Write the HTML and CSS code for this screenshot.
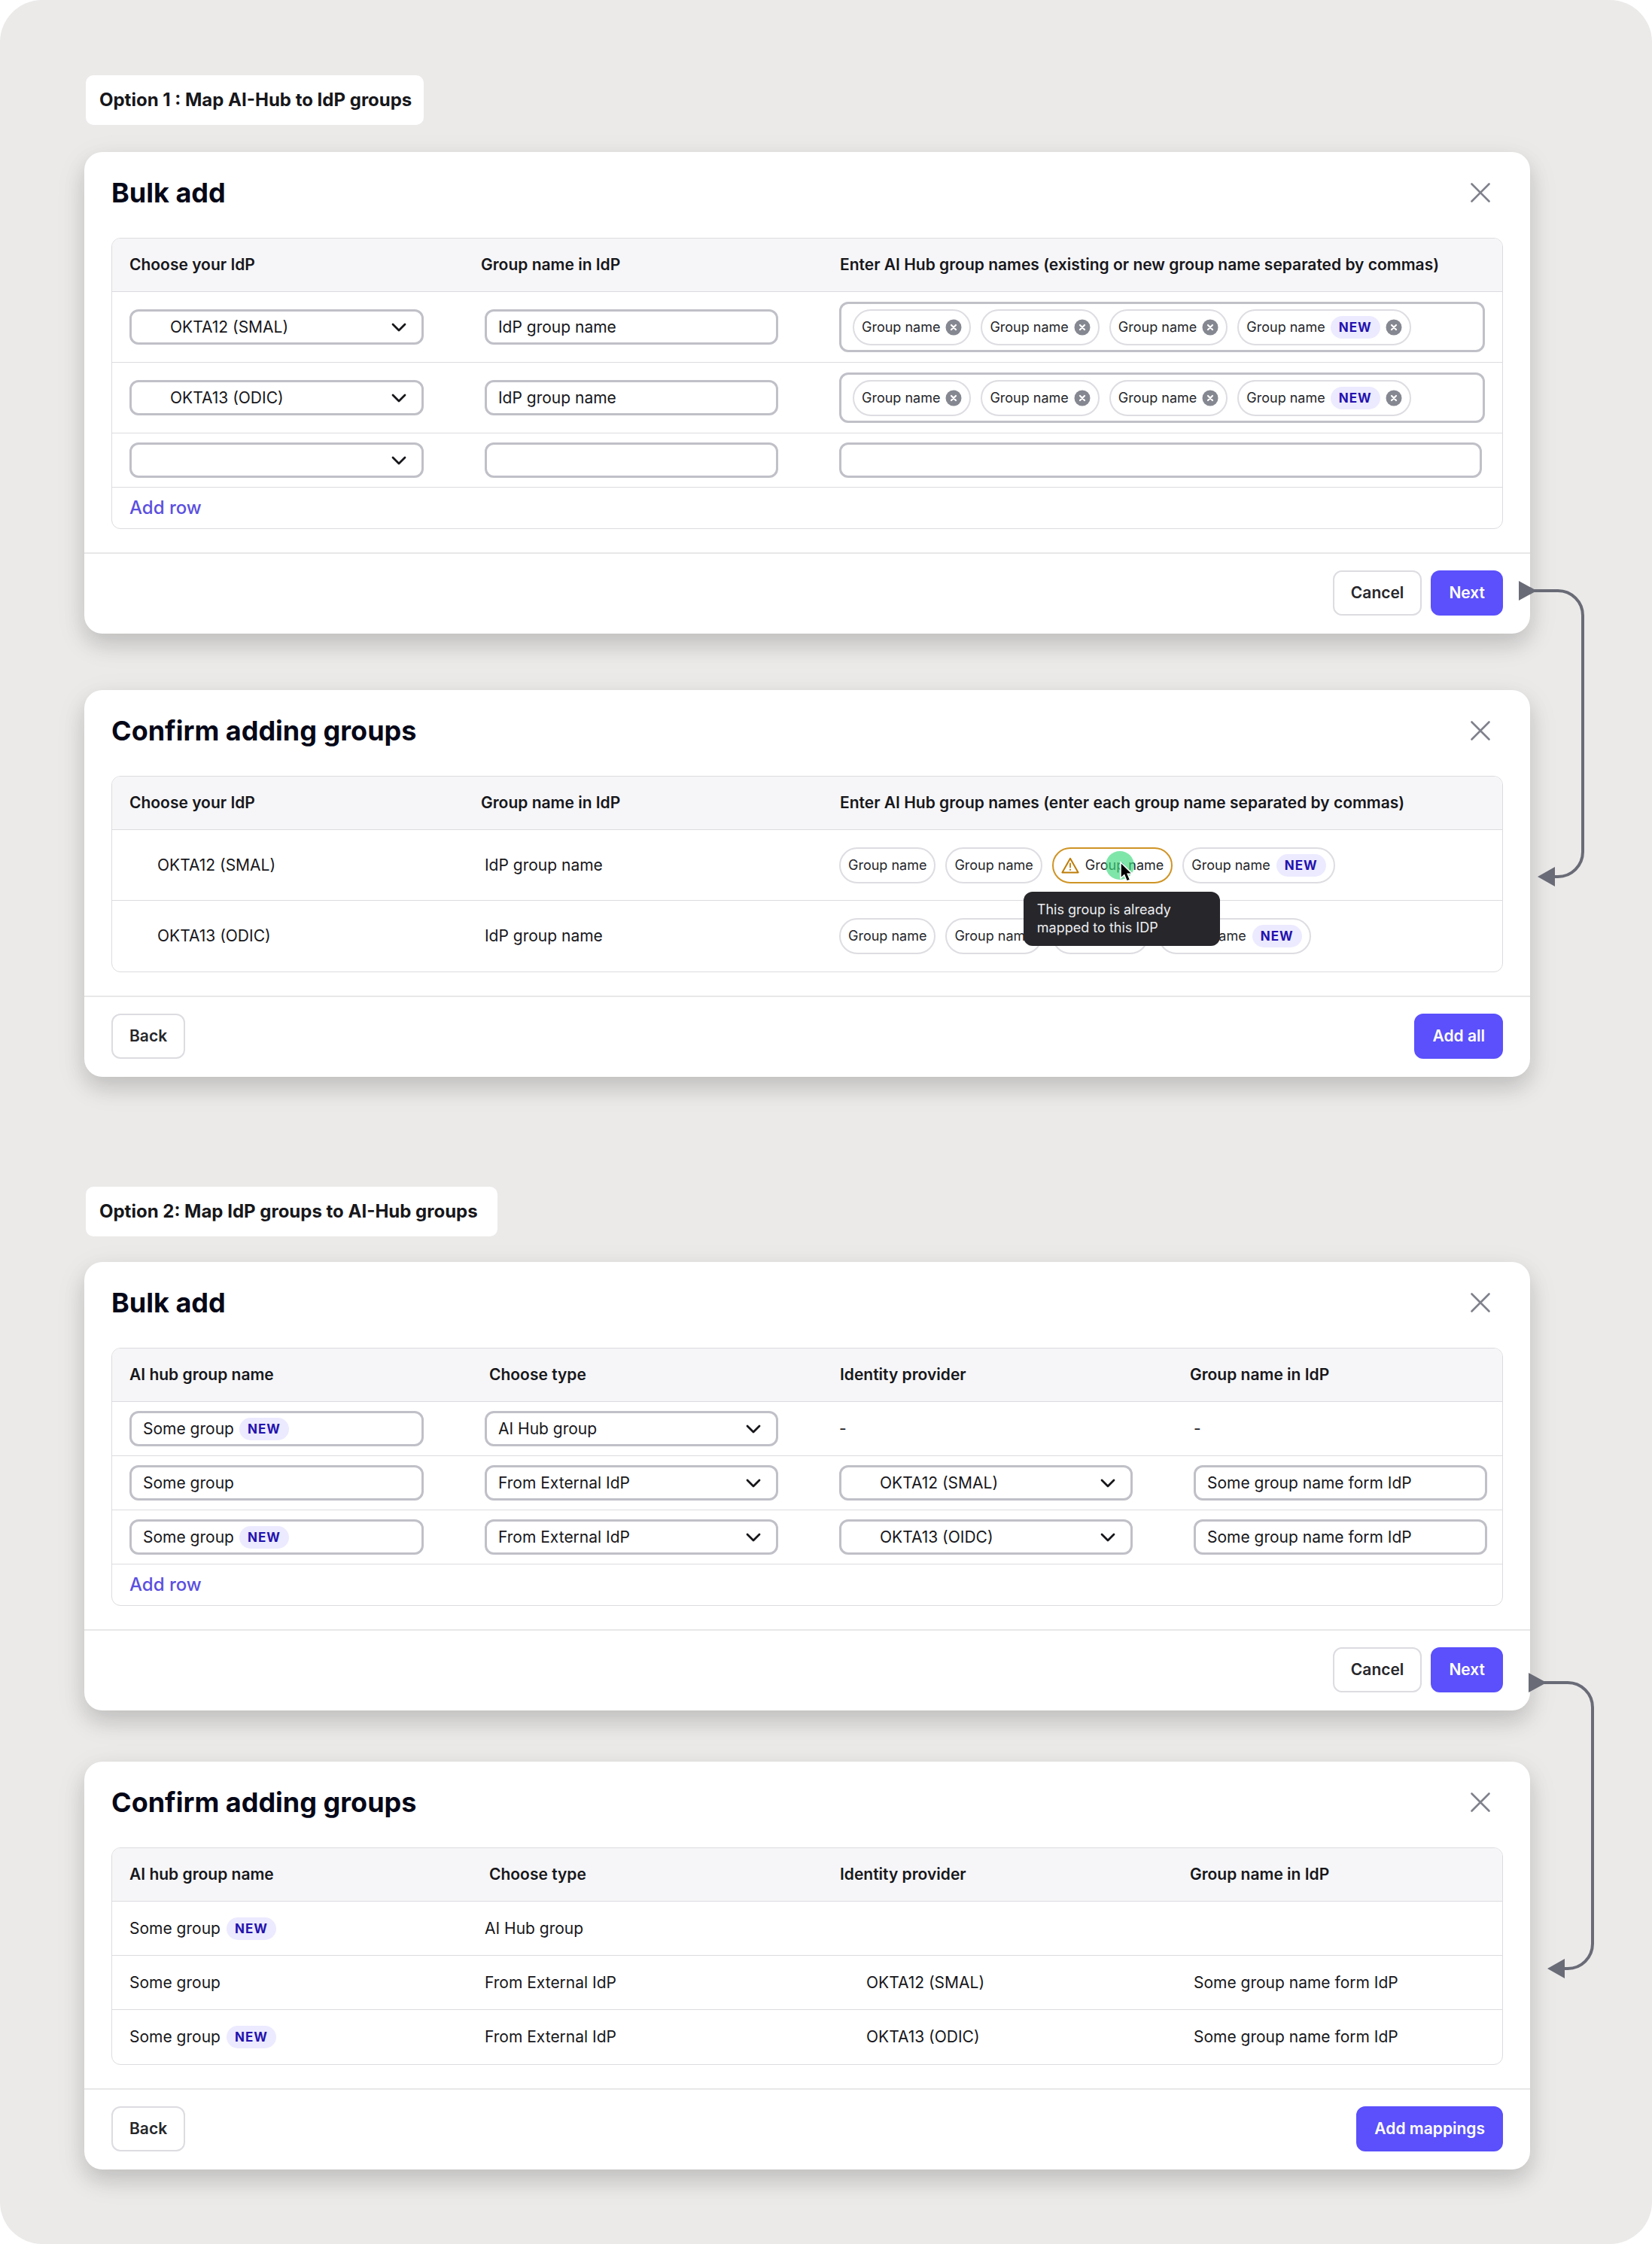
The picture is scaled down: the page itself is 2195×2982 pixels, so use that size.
FILE: index.html
```html
<!DOCTYPE html>
<html lang="en">
<head>
<meta charset="utf-8">
<meta name="viewport" content="width=device-width, initial-scale=1">
<title>Bulk add group mappings</title>
<link rel="stylesheet" href="styles.css">
</head>
<body>
<svg class="sprite" aria-hidden="true">
  <symbol id="close" viewBox="0 0 32 32"><path d="M4.500 4.500 27.500 27.500M27.500 4.500 4.500 27.500" fill="none" stroke="currentColor" stroke-width="2.600" stroke-linecap="round"/></symbol>
  <symbol id="chevron" viewBox="0 0 20 12"><path d="M2 2 10 10 18 2" fill="none" stroke="currentColor" stroke-width="2.800" stroke-linecap="round" stroke-linejoin="round"/></symbol>
  <symbol id="remove" viewBox="0 0 22 22"><circle cx="11" cy="11" r="10.500" fill="#858791"/><path d="M8 8 14 14M14 8 8 14" fill="none" stroke="#fff" stroke-width="2.200" stroke-linecap="round"/></symbol>
  <symbol id="warning" viewBox="0 0 24 22"><path d="M12 1.800 22.600 20.500H1.400Z" fill="none" stroke="currentColor" stroke-width="2" stroke-linejoin="round"/><path d="M12 8.500V13.500" stroke="currentColor" stroke-width="1.800" stroke-linecap="round"/><circle cx="12" cy="16.800" r="1.100" fill="currentColor"/></symbol>
  <symbol id="arrow" viewBox="0 0 92 410"><path d="M20 15H53A33 33 0 0 1 86 48V362A33 33 0 0 1 53 395H44" fill="none" stroke="currentColor" stroke-width="4"/><path d="M1 2 25 15 1 28ZM26 395 49 382V408Z" fill="currentColor"/></symbol>
</svg>

<main class="board">
  <section class="option">
    <h1 class="option-label">Option 1 : Map AI-Hub to IdP groups</h1>

    <article class="card">
      <header class="card-head">
        <h2 class="card-title">Bulk add</h2>
        <button class="close" type="button" aria-label="Close"><svg class="close-icon"><use href="#close"/></svg></button>
      </header>
      <div class="table-frame">
        <table class="grid">
          <thead>
            <tr><th scope="col" class="col">Choose your IdP</th><th scope="col" class="col col-near">Group name in IdP</th><th scope="col">Enter AI Hub group names (existing or new group name separated by commas)</th></tr>
          </thead>
          <tbody>
            <tr class="tall">
              <td><div class="select"><select class="control indented" aria-label="Choose your IdP"><option>OKTA12 (SMAL)</option><option>OKTA13 (ODIC)</option></select><svg class="chevron"><use href="#chevron"/></svg></div></td>
              <td><input class="control" type="text" aria-label="Group name in IdP" value="IdP group name"></td>
              <td class="wide">
                <div class="control tags">
                  <span class="chip removable">Group name<button class="remove" type="button" aria-label="Remove"><svg class="remove-icon"><use href="#remove"/></svg></button></span>
                  <span class="chip removable">Group name<button class="remove" type="button" aria-label="Remove"><svg class="remove-icon"><use href="#remove"/></svg></button></span>
                  <span class="chip removable">Group name<button class="remove" type="button" aria-label="Remove"><svg class="remove-icon"><use href="#remove"/></svg></button></span>
                  <span class="chip removable">Group name<span class="badge">NEW</span><button class="remove" type="button" aria-label="Remove"><svg class="remove-icon"><use href="#remove"/></svg></button></span>
                </div>
              </td>
            </tr>
            <tr class="tall">
              <td><div class="select"><select class="control indented" aria-label="Choose your IdP"><option>OKTA13 (ODIC)</option><option>OKTA12 (SMAL)</option></select><svg class="chevron"><use href="#chevron"/></svg></div></td>
              <td><input class="control" type="text" aria-label="Group name in IdP" value="IdP group name"></td>
              <td class="wide">
                <div class="control tags">
                  <span class="chip removable">Group name<button class="remove" type="button" aria-label="Remove"><svg class="remove-icon"><use href="#remove"/></svg></button></span>
                  <span class="chip removable">Group name<button class="remove" type="button" aria-label="Remove"><svg class="remove-icon"><use href="#remove"/></svg></button></span>
                  <span class="chip removable">Group name<button class="remove" type="button" aria-label="Remove"><svg class="remove-icon"><use href="#remove"/></svg></button></span>
                  <span class="chip removable">Group name<span class="badge">NEW</span><button class="remove" type="button" aria-label="Remove"><svg class="remove-icon"><use href="#remove"/></svg></button></span>
                </div>
              </td>
            </tr>
            <tr>
              <td><div class="select"><select class="control indented" aria-label="Choose your IdP"><option value=""></option><option>OKTA12 (SMAL)</option><option>OKTA13 (ODIC)</option></select><svg class="chevron"><use href="#chevron"/></svg></div></td>
              <td><input class="control" type="text" aria-label="Group name in IdP"></td>
              <td class="wide-empty"><input class="control" type="text" aria-label="AI Hub group names"></td>
            </tr>
          </tbody>
          <tfoot><tr><td colspan="3"><button class="add-row" type="button">Add row</button></td></tr></tfoot>
        </table>
      </div>
      <footer class="card-foot">
        <button class="button push" type="button">Cancel</button>
        <button class="button primary" type="button">Next</button>
      </footer>
      <svg class="connector connector-inset" viewBox="0 0 92 410" aria-hidden="true"><use href="#arrow"/></svg>
    </article>

    <article class="card">
      <header class="card-head">
        <h2 class="card-title">Confirm adding groups</h2>
        <button class="close" type="button" aria-label="Close"><svg class="close-icon"><use href="#close"/></svg></button>
      </header>
      <div class="table-frame">
        <table class="grid">
          <thead>
            <tr><th scope="col" class="col">Choose your IdP</th><th scope="col" class="col col-near">Group name in IdP</th><th scope="col">Enter AI Hub group names (enter each group name separated by commas)</th></tr>
          </thead>
          <tbody>
            <tr class="tall">
              <td class="provider">OKTA12 (SMAL)</td>
              <td>IdP group name</td>
              <td class="wide">
                <div class="chips">
                  <span class="chip">Group name</span>
                  <span class="chip">Group name</span>
                  <span class="chip warning" aria-describedby="mapped-tip"><svg class="warning-icon"><use href="#warning"/></svg>Group name
                    <svg class="pointer" viewBox="0 0 40 44" aria-hidden="true"><circle cx="19" cy="20" r="19" fill="#3bd97b" fill-opacity=".65"/><path d="M20 16V37L24.800 32.800 28.200 41 32.600 39.200 29.200 31.200H35.500Z" fill="#000" stroke="#fff" stroke-width="1.500"/></svg>
                    <span class="tooltip" id="mapped-tip" role="tooltip">This group is already mapped to this IDP</span>
                  </span>
                  <span class="chip">Group name<span class="badge">NEW</span></span>
                </div>
              </td>
            </tr>
            <tr class="tall">
              <td class="provider">OKTA13 (ODIC)</td>
              <td>IdP group name</td>
              <td class="wide">
                <div class="chips">
                  <span class="chip">Group name</span>
                  <span class="chip">Group name</span>
                  <span class="chip">Group name</span>
                  <span class="chip">Group name<span class="badge">NEW</span></span>
                </div>
              </td>
            </tr>
          </tbody>
        </table>
      </div>
      <footer class="card-foot">
        <button class="button" type="button">Back</button>
        <button class="button primary push" type="button">Add all</button>
      </footer>
    </article>
  </section>

  <section class="option option-mapping">
    <h1 class="option-label">Option 2: Map IdP groups to AI-Hub groups</h1>

    <article class="card">
      <header class="card-head">
        <h2 class="card-title">Bulk add</h2>
        <button class="close" type="button" aria-label="Close"><svg class="close-icon"><use href="#close"/></svg></button>
      </header>
      <div class="table-frame">
        <table class="grid">
          <thead>
            <tr><th scope="col" class="col">AI hub group name</th><th scope="col" class="col col-far">Choose type</th><th scope="col" class="col">Identity provider</th><th scope="col" class="col-near">Group name in IdP</th></tr>
          </thead>
          <tbody>
            <tr>
              <td><div class="control tagged"><input class="bare" type="text" aria-label="AI hub group name" value="Some group"><span class="badge">NEW</span></div></td>
              <td><div class="select"><select class="control" aria-label="Choose type"><option>AI Hub group</option><option>From External IdP</option></select><svg class="chevron"><use href="#chevron"/></svg></div></td>
              <td>-</td>
              <td class="last">-</td>
            </tr>
            <tr>
              <td><input class="control" type="text" aria-label="AI hub group name" value="Some group"></td>
              <td><div class="select"><select class="control" aria-label="Choose type"><option>From External IdP</option><option>AI Hub group</option></select><svg class="chevron"><use href="#chevron"/></svg></div></td>
              <td><div class="select"><select class="control indented" aria-label="Identity provider"><option>OKTA12 (SMAL)</option><option>OKTA13 (OIDC)</option></select><svg class="chevron"><use href="#chevron"/></svg></div></td>
              <td class="last"><input class="control" type="text" aria-label="Group name in IdP" value="Some group name form IdP"></td>
            </tr>
            <tr>
              <td><div class="control tagged"><input class="bare" type="text" aria-label="AI hub group name" value="Some group"><span class="badge">NEW</span></div></td>
              <td><div class="select"><select class="control" aria-label="Choose type"><option>From External IdP</option><option>AI Hub group</option></select><svg class="chevron"><use href="#chevron"/></svg></div></td>
              <td><div class="select"><select class="control indented" aria-label="Identity provider"><option>OKTA13 (OIDC)</option><option>OKTA12 (SMAL)</option></select><svg class="chevron"><use href="#chevron"/></svg></div></td>
              <td class="last"><input class="control" type="text" aria-label="Group name in IdP" value="Some group name form IdP"></td>
            </tr>
          </tbody>
          <tfoot><tr><td colspan="4"><button class="add-row" type="button">Add row</button></td></tr></tfoot>
        </table>
      </div>
      <footer class="card-foot">
        <button class="button push" type="button">Cancel</button>
        <button class="button primary" type="button">Next</button>
      </footer>
      <svg class="connector connector-edge" viewBox="0 0 92 410" aria-hidden="true"><use href="#arrow"/></svg>
    </article>

    <article class="card">
      <header class="card-head">
        <h2 class="card-title">Confirm adding groups</h2>
        <button class="close" type="button" aria-label="Close"><svg class="close-icon"><use href="#close"/></svg></button>
      </header>
      <div class="table-frame">
        <table class="grid">
          <thead>
            <tr><th scope="col" class="col">AI hub group name</th><th scope="col" class="col col-far">Choose type</th><th scope="col" class="col">Identity provider</th><th scope="col" class="col-near">Group name in IdP</th></tr>
          </thead>
          <tbody>
            <tr><td><div class="named">Some group<span class="badge">NEW</span></div></td><td>AI Hub group</td><td></td><td></td></tr>
            <tr><td>Some group</td><td>From External IdP</td><td class="provider">OKTA12 (SMAL)</td><td class="last">Some group name form IdP</td></tr>
            <tr><td><div class="named">Some group<span class="badge">NEW</span></div></td><td>From External IdP</td><td class="provider">OKTA13 (ODIC)</td><td class="last">Some group name form IdP</td></tr>
          </tbody>
        </table>
      </div>
      <footer class="card-foot">
        <button class="button" type="button">Back</button>
        <button class="button primary push" type="button">Add mappings</button>
      </footer>
    </article>
  </section>
</main>
</body>
</html>
```

FILE: styles.css
```css
* { box-sizing: border-box; }

body {
  margin: 0;
  background: #fff;
  color: #17171b;
  font: 400 21px/28px Inter, "Liberation Sans", sans-serif;
}

button, input, select { font: inherit; color: inherit; }
button { cursor: pointer; }

.sprite { display: none; }

.board {
  display: flex;
  flex-direction: column;
  gap: 146px;
  min-height: 100vh;
  padding: 100px 162px 98px 112px;
  border-radius: 56px;
  background: #ebeae9;
}

.option { display: flex; flex-direction: column; gap: 75px; }
.option-mapping { gap: 68px; }

.option-label {
  align-self: flex-start;
  margin: 0 0 -39px 2px;
  padding: 18px 16px 18px 18px;
  border-radius: 10px;
  background: #fff;
  font-size: 24px;
  font-weight: 700;
  line-height: 30px;
}
.option-mapping .option-label { margin-bottom: -34px; padding-right: 26px; }

/* Cards */
.card {
  position: relative;
  border-radius: 24px;
  background: #fff;
  box-shadow: 0 12px 44px rgba(0, 0, 0, .08), 0 14px 28px rgba(0, 0, 0, .13);
}

.card-head {
  display: flex;
  align-items: center;
  justify-content: space-between;
  padding: 33px 50px 39px 36px;
}

.card-title {
  margin: 0;
  color: #060818;
  font-size: 36px;
  font-weight: 700;
  line-height: 42px;
}

.close { display: flex; padding: 0; border: 0; background: none; color: #7f818c; }
.close-icon { width: 32px; height: 32px; }

.card-foot {
  display: flex;
  gap: 12px;
  margin-top: 31px;
  padding: 22px 36px 24px;
  border-top: 2px solid #e8e8e9;
}

.button {
  height: 60px;
  padding: 0 22px;
  border: 2px solid #dcdce1;
  border-radius: 12px;
  background: #fff;
  color: #26272b;
  font-weight: 600;
}
.primary { border-color: #5b50fb; background: #5b50fb; color: #fff; }
.push { margin-left: auto; }

/* Tables */
.table-frame {
  margin: 0 36px;
  border: 1px solid #dcdce0;
  border-radius: 12px;
}

.grid { width: 100%; table-layout: fixed; border-collapse: separate; border-spacing: 0; }

.grid th {
  height: 71px;
  padding: 0 0 0 25px;
  border-bottom: 1px solid #dcdce0;
  background: #f6f6f8;
  font-weight: 600;
  text-align: left;
  white-space: nowrap;
}
.grid th:first-child { padding-left: 23px; border-top-left-radius: 11px; }
.grid th:last-child { border-top-right-radius: 11px; }
.col { width: 25.5%; }
.grid .col-near { padding-left: 19px; }
.grid .col-far { padding-left: 30px; }

.grid td {
  height: 72px;
  padding: 0 57px 0 24px;
  border-bottom: 1px solid #dcdce0;
}
.grid td:first-child { padding-left: 23px; }
.grid .tall td { height: 94px; }
.grid .wide { padding-right: 23px; }
.grid .wide-empty { padding-right: 27px; }
.grid .last { padding-right: 20px; }
.grid .provider, .grid .provider:first-child { padding-left: 60px; }
.grid tfoot td { height: 54px; border-bottom: 0; }
.grid tbody:last-child tr:last-child td { border-bottom: 0; }

.add-row {
  display: block;
  padding: 0;
  border: 0;
  background: none;
  color: #5b4fe0;
  font-size: 24px;
  font-weight: 500;
}

/* Form controls */
.control {
  display: block;
  width: 100%;
  height: 47px;
  padding: 0 15px;
  border: 3px solid #c0c0c8;
  border-radius: 12px;
  background: #fff;
  outline: 0;
}

.select { position: relative; }
.select .control { appearance: none; padding-right: 56px; }
.select .indented { padding-left: 51px; }
.chevron {
  position: absolute;
  top: 18px;
  right: 23px;
  width: 20px;
  height: 12px;
  pointer-events: none;
}

.tagged { display: flex; align-items: center; gap: 8px; }
.bare { width: 120px; padding: 0; border: 0; background: none; outline: 0; }

.tags { display: flex; align-items: center; gap: 13px; height: 67px; }

/* Chips and badges */
.chips { display: flex; gap: 13px; }

.chip {
  position: relative;
  display: flex;
  align-items: center;
  gap: 8px;
  height: 48px;
  padding: 0 10px;
  border: 2px solid #dddde2;
  border-radius: 24px;
  background: #fff;
  color: #26272b;
  font-size: 18px;
  white-space: nowrap;
}
.removable { gap: 7px; }
.warning { border-color: #cf9425; }
.warning-icon { width: 24px; height: 22px; color: #bd7c08; }

.badge {
  padding: 0 11px;
  border-radius: 15px;
  background: #eceaff;
  color: #2312ae;
  font-size: 17px;
  font-weight: 700;
  line-height: 30px;
  letter-spacing: 1px;
}

.remove { display: flex; padding: 0; border: 0; background: none; }
.remove-icon { width: 22px; height: 22px; }

.named { display: flex; align-items: center; gap: 8px; }

.pointer {
  position: absolute;
  top: 2px;
  left: 69px;
  z-index: 2;
  width: 40px;
  height: 44px;
}

.tooltip {
  position: absolute;
  top: 57px;
  left: -40px;
  z-index: 1;
  width: 261px;
  padding: 12px 18px;
  border-radius: 12px;
  background: #27272b;
  color: #ededf0;
  font-size: 18px;
  line-height: 24px;
  white-space: normal;
}

/* Arrows that lead from one card to the next */
.connector {
  position: absolute;
  z-index: 1;
  width: 92px;
  height: 410px;
  color: #696b76;
}
.connector-inset { top: calc(100% - 72px); left: calc(100% - 16px); }
.connector-edge { top: calc(100% - 52px); left: calc(100% - 3px); }
```
